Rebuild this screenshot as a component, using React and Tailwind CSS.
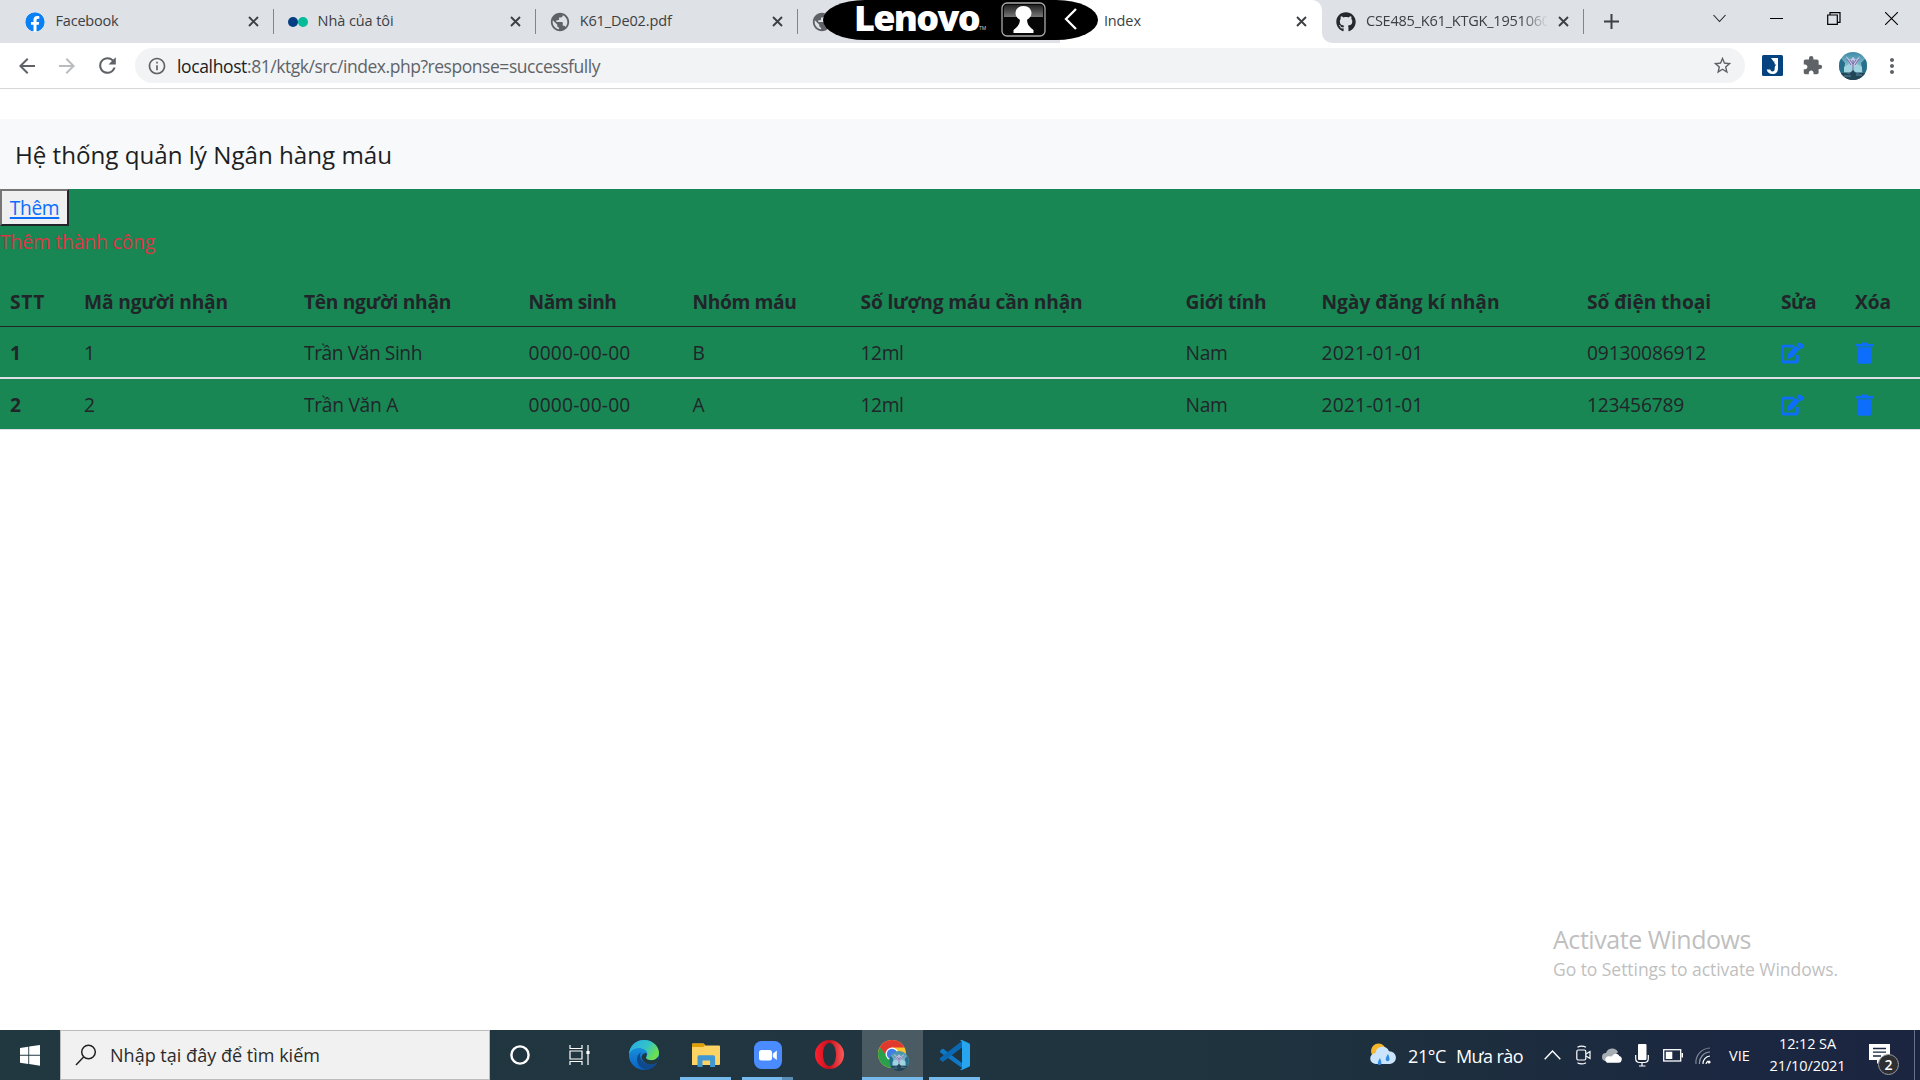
import React, { useLayoutEffect, useRef } from "react";
import { FaFacebook, FaGithub } from "react-icons/fa";
import { MdPublic, MdArrowBack, MdArrowForward, MdRefresh, MdInfoOutline, MdStarBorder, MdExtension, MdMoreVert } from "react-icons/md";

// Spaces the letters so that a label takes exactly w pixels.
function Fit({ w, className = "", children }) {
  const ref = useRef(null);
  useLayoutEffect(() => {
    const el = ref.current;
    el.style.letterSpacing = "0px";
    const natural = el.getBoundingClientRect().width;
    el.style.letterSpacing = (w - natural) / Math.max(1, el.textContent.length) + "px";
  }, [w, children]);
  return <span ref={ref} className={"inline-block whitespace-pre " + className}>{children}</span>;
}

const Close = () => (
  <svg className="h-[11px] w-[11px]" viewBox="0 0 11 11" stroke="#3c4043" strokeWidth="1.9">
    <path d="M1 1l9 9M10 1l-9 9" />
  </svg>
);

function Tab({ icon, title, w, active, close = true, sep = true, fade }) {
  return (
    <div className={"flex h-[43px] w-[262.1px] shrink-0 items-center " + (active ? "rounded-t-[10px] bg-white" : "")}>
      <div className="ml-[13px] flex w-[21px] shrink-0 justify-center">{icon}</div>
      <div className={"-mt-[2px] ml-[10px] w-[182px] shrink-0 overflow-hidden text-[14.500px] leading-5 text-[#3c4043] " + (fade ? "[mask-image:linear-gradient(to_right,black_155px,transparent_182px)]" : "")}>
        {title && <Fit w={w}>{title}</Fit>}
      </div>
      <div className="ml-[10.500px] w-[11px] shrink-0">{close && <Close />}</div>
      {sep && <div className="ml-auto h-[25px] w-px bg-[#80868b]" />}
    </div>
  );
}

function Avatar({ size }) {
  return (
    <svg className={size} viewBox="0 0 28 28">
      <defs>
        <clipPath id="avatar"><circle cx="14" cy="14" r="14" /></clipPath>
        <linearGradient id="sky" x2="0" y2="1"><stop stopColor="#3d8aa5" /><stop offset=".55" stopColor="#8cc4d4" /><stop offset="1" stopColor="#16364c" /></linearGradient>
      </defs>
      <g clipPath="url(#avatar)">
        <rect width="28" height="28" fill="url(#sky)" />
        <path d="M0 4l6 7-1 12H0zM28 5l-6 6 2 12h4z" fill="#286f8c" />
        <path d="M5 15l5-3h8l5 3v5H5z" fill="#9fd3df" />
        <path d="M7 4l3 8 4 4 4-4 3-8-4 4-3-3-3 3z" fill="#c4c6e4" />
        <path d="M8 7l4 6M20 7l-4 6M14 8v11M11 8l3 4 3-4" fill="none" stroke="#6f6da5" strokeWidth="1" />
        <path d="M2 21l5 0 3 1 4-4 4 4 3-1h5v7H2z" fill="#234558" />
        <path d="M5 24h7M17 23h6" stroke="#5b8ca0" strokeWidth="1" />
      </g>
    </svg>
  );
}

function LenovoPill() {
  return (
    <div className="absolute left-[823px] top-0 flex h-10 w-[275px] items-center rounded-[42px/20px] bg-black">
      <div className="ml-[31px] mt-[-5px] w-[125px] shrink-0"><Fit w={125} className="text-[36px] font-extrabold leading-[50px] text-white">Lenovo</Fit></div>
      <span className="mt-[18px] w-[8px] text-[5px] text-gray-300">TM</span>
      <svg className="ml-[14px] mt-[-2px] h-[35px] w-[45px] shrink-0" viewBox="0 0 45 35">
        <defs><linearGradient id="gloss" x2="0" y2="1"><stop stopColor="#222" /><stop offset="1" stopColor="#777" /></linearGradient></defs>
        <rect x="1" y="1" width="43" height="33" rx="5" fill="#050505" stroke="#aaa" strokeWidth="1.3" />
        <path d="M3 15V6q0-3 3-3h33q3 0 3 3v9z" fill="url(#gloss)" />
        <path d="M22.500 4c5 0 8 3.200 8 7.300 0 3-2 4.700-4.400 6.500 0 4 1.800 7 6.400 10.200v3H12.500v-3c4.600-3.200 6.400-6.200 6.400-10.200-2.400-1.800-4.400-3.500-4.400-6.500C14.500 7.200 17.500 4 22.500 4z" fill="#fff" />
      </svg>
      <svg className="ml-[18px] mt-[-2px] h-[22px] w-[13px] shrink-0" viewBox="0 0 13 22" fill="none" stroke="#fff" strokeWidth="2.300"><path d="M12 1L2 11l10 10" /></svg>
    </div>
  );
}

function Chrome() {
  return (
    <div className="relative h-[93px] bg-white">
    <div className="flex h-[89px] flex-col border-b border-[#d6d8da]">
      <div className="flex h-[43px] shrink-0 bg-[#dee1e6] pl-[11.5px]">
        <Tab icon={<FaFacebook className="h-5 w-5 rounded-full bg-white text-[#0a80f5]" />} title="Facebook" w={63} />
        <Tab icon={<svg className="ml-[2px] h-5 w-5 shrink-0" viewBox="0 0 20 20"><circle cx="5" cy="10" r="5" fill="#063e84" /><circle cx="15" cy="10" r="5" fill="#05bb99" /></svg>} title="Nhà của tôi" w={76} />
        <Tab icon={<MdPublic className="ml-[2px] h-[22px] w-[22px] shrink-0 text-[#5f6368]" />} title="K61_De02.pdf" w={92} />
        <Tab icon={<MdPublic className="ml-[2px] h-[22px] w-[22px] shrink-0 text-[#5f6368]" />} close={false} sep={false} />
        <Tab title="Index" w={37} active sep={false} />
        <div className="flex flex-1 bg-white">
          <div className="flex flex-1 rounded-bl-[10px] bg-[#dee1e6]">
            <Tab icon={<FaGithub className="ml-[2px] h-5 w-5 shrink-0 text-[#24292f]" />} title="CSE485_K61_KTGK_19510606" w={192} fade />
            <svg className="ml-[20px] mt-[14px] h-[15px] w-[15px]" viewBox="0 0 15 15" stroke="#3c4043" strokeWidth="2"><path d="M7.500 0v15M0 7.500h15" /></svg>
            <svg className="ml-[94px] mt-[14px] h-[9px] w-[13px]" viewBox="0 0 13 9" fill="none" stroke="#222" strokeWidth="1.100"><path d="M.5 1l6 6.500 6-6.500" /></svg>
            <div className="ml-[44px] mt-[18px] h-px w-[13px] bg-black" />
            <svg className="ml-[44px] mt-[12px] h-[13px] w-[14px]" viewBox="0 0 14 13" fill="none" stroke="#000" strokeWidth="1.200"><path d="M.7 3h9.600v9.400H.700zM3 3V.700h10v9.600h-2.700" /></svg>
            <svg className="ml-[44px] mt-[12px] h-[13px] w-[13px]" viewBox="0 0 13 13" stroke="#000" strokeWidth="1.100"><path d="M0 0l13 13M13 0L0 13" /></svg>
          </div>
        </div>
      </div>
      <div className="flex flex-1 items-center text-[#5f6368]">
        <MdArrowBack className="ml-[15px] h-[24px] w-[24px]" />
        <MdArrowForward className="ml-[16px] h-[24px] w-[24px] text-[#babcbe]" />
        <MdRefresh className="ml-[16px] h-[25px] w-[25px]" />
        <div className="ml-[15px] flex h-[35px] w-[1610px] items-center rounded-full bg-[#f1f3f4]">
          <MdInfoOutline className="ml-[12px] h-[20px] w-[20px]" />
          <div className="ml-[10px] flex text-[17.500px] leading-6">
            <Fit w={70} className="text-[#202124]">localhost</Fit>
            <Fit w={353}>:81/ktgk/src/index.php?response=successfully</Fit>
          </div>
          <MdStarBorder className="ml-auto mr-[12px] h-[21px] w-[21px]" />
        </div>
        <svg className="ml-[17px] h-[21px] w-[21px]" viewBox="0 0 21 21"><rect width="21" height="21" rx="1.500" fill="#04437f" /><path d="M9 3h7v10c0 4-2 6-5.500 6-3.200 0-5.300-1.700-5.700-4.500h3.500c.2 1.300 1 1.900 2.200 1.900 1.500 0 2.200-1 2.200-3V8z" fill="#fff" /><path d="M12.500 6l-4 5h3l-1.200 4 4-5.500h-2.800z" fill="#04437f" /></svg>
        <MdExtension className="ml-[19px] h-[21px] w-[21px]" />
        <Avatar size="ml-[16px] h-7 w-7" />
        <MdMoreVert className="ml-[13px] h-[24px] w-[24px]" />
      </div>
    </div>
    <LenovoPill />
    </div>
  );
}

const COLS = "grid grid-cols-[74px_220px_224.500px_164px_168px_325px_136px_265.500px_194px_74px_75px] items-center [&>*]:pl-[10px] [&>*]:pt-[2px]";

const HEAD = [["STT", 35], ["Mã người nhận", 144], ["Tên người nhận", 147], ["Năm sinh", 88], ["Nhóm máu", 104], ["Số lượng máu cần nhận", 222], ["Giới tính", 81], ["Ngày đăng kí nhận", 178], ["Số điện thoại", 124], ["Sửa", 35], ["Xóa", 36]];
const ROWS = [
  [["1", 11], ["1", 11], ["Trần Văn Sinh", 118], ["0000-00-00", 102], ["B", 12], ["12ml", 43], ["Nam", 42], ["2021-01-01", 102], ["09130086912", 119]],
  [["2", 11], ["2", 11], ["Trần Văn A", 94], ["0000-00-00", 102], ["A", 13], ["12ml", 43], ["Nam", 42], ["2021-01-01", 102], ["123456789", 97]],
];

const Edit = () => (
  <svg className="h-[22px] w-[23px]" viewBox="0 0 23 22">
    <path d="M13 4.200H2.700Q1.500 4.200 1.500 5.400V18.800Q1.500 20 2.700 20H15Q16.300 20 16.300 18.800V13" fill="none" stroke="#0d6efd" strokeWidth="2.800" />
    <path d="M6 17.500l1.200-5.800L14.300 3.500l4.500 3.600L11.500 15zM15.600 2.600L18 .2l4.700 2.600-.2 2.600-2.300 2z" fill="#0d6efd" />
  </svg>
);
const Trash = () => (
  <svg className="h-[22px] w-[19px]" viewBox="0 0 19 22" fill="#0d6efd">
    <path d="M0 3Q0 2 1 2h5l1-1.500h5L13 2h5q1 0 1 1v1.400H0zM2 5.200h15l-.6 14.800q-.1 1.700-1.700 1.700H4.300Q2.700 21.700 2.600 20z" />
  </svg>
);

function Page() {
  return (
    <div className="flex-1 pt-[26px] text-[19.200px] leading-[30px] text-[#212529]">
      <div className="flex h-[70px] items-center bg-[#f8f9fa] pl-[15px] pt-[2px] text-[24.200px] text-[#1c1f22]"><Fit w={377}>Hệ thống quản lý Ngân hàng máu</Fit></div>
      <div className="h-[241px] border-b border-[#dee2e6] bg-[#198754]">
        <button className="flex h-[37px] w-[69px] items-center justify-center border-2 border-b-[#212529] border-l-[#767676] border-r-[#212529] border-t-[#767676] bg-[#efefef] text-[#0d6efd]">
          <Fit w={49.5} className="underline decoration-2 underline-offset-2">Thêm</Fit>
        </button>
        <div className="h-[50px] pt-[1px] text-[#dc3545]"><Fit w={155}>Thêm thành công</Fit></div>
        <div className={"h-[51px] border-b border-[#212529] font-bold " + COLS}>
          {HEAD.map(([t, w]) => <div key={t}><Fit w={w}>{t}</Fit></div>)}
        </div>
        {ROWS.map((r, i) => (
          <div key={i} className={COLS + (i === 0 ? " h-[52px] border-b-2 border-[#dee2e6]" : " h-[50px]")}>
            {r.map(([t, w], j) => <div key={j} className={j === 0 ? "font-bold" : ""}><Fit w={w}>{t}</Fit></div>)}
            <div className="flex"><Edit /></div>
            <div className="flex"><Trash /></div>
          </div>
        ))}
      </div>
      <div className="ml-[1553px] mt-[492px] flex flex-col text-[#bfbfbf]">
        <Fit w={198} className="w-max text-[25px] leading-[34px]">Activate Windows</Fit>
        <Fit w={285} className="w-max text-[17.500px] leading-[26px]">Go to Settings to activate Windows.</Fit>
      </div>
    </div>
  );
}

function TaskButton({ children, bar, className = "" }) {
  return (
    <div className={"flex h-[50px] shrink-0 flex-col items-center " + className}>
      <div className="flex flex-1 items-center pt-[2px]">{children}</div>
      <div className={"h-[3px] w-full " + (bar || "")} />
    </div>
  );
}

const EdgeIcon = () => (
  <svg className="h-[30px] w-[30px]" viewBox="0 0 30 30">
    <defs>
      <linearGradient id="e1" y2=".5"><stop stopColor="#2aa9e8" /><stop offset=".6" stopColor="#32c3c8" /><stop offset="1" stopColor="#6ee04e" /></linearGradient>
      <linearGradient id="e2" x2="0" y2="1"><stop stopColor="#1b9de2" /><stop offset="1" stopColor="#0b63c4" /></linearGradient>
    </defs>
    <circle cx="15" cy="15" r="15" fill="url(#e2)" />
    <path d="M0 14C.8 5.500 7 0 15 0c9 0 15 6.500 15 13 0 4.500-3.500 7.300-7.500 7.300-3.500 0-5.500-1.300-5.500-2.600 0-.8 1.300-1.400 1.300-3.700C18.300 10.500 14 8 9.500 8 5.500 8 2 10 0 14z" fill="url(#e1)" />
    <path d="M12.500 12c-3 1.500-4.800 4.500-4.500 8 .4 5 4 9.200 9.500 10 4.500-.5 8.500-3.200 10.600-7.200-2 1.100-4 1.700-6.100 1.700-6 0-11-4-11-9 0-1.300.5-2.500 1.500-3.500z" fill="#104a8e" />
    <path d="M17 17.700c0 1.300 2 2.600 5.500 2.600 3 0 5.800-1.500 7-4.300l-.2 4.500-1.200 2.300c-2 1.100-4 1.700-6.100 1.700-6 0-9-4-9.500-7.500.5-2.500 2.500-4 5-4 .8 2-.5 3.700-.5 4.700z" fill="#213840" />
  </svg>
);

function Taskbar() {
  return (
    <div className="flex h-[50px] shrink-0 items-center bg-[linear-gradient(to_right,#213840_0%,#20343f_60%,#1d2f3e_75%,#1b2740_90%,#1b2540_100%)] text-white">
      <svg className="ml-[20px] h-[21px] w-[20px]" viewBox="0 0 20 21" fill="#fff"><path d="M0 3l8.300-1.300v8.100H0zM9.200 1.500L20 0v9.800H9.200zM0 10.700h8.300v8.200L0 17.700zM9.200 10.700H20v10L9.200 19z" /></svg>
      <div className="ml-[20px] flex h-[50px] w-[430px] items-center border border-[#bcbcbc] bg-[#f1f1f1] text-[#2b2b2b]">
        <svg className="ml-[14px] h-[22px] w-[22px]" viewBox="0 0 22 22" fill="none" stroke="#222" strokeWidth="1.500"><circle cx="13.500" cy="8" r="6.800" /><path d="M8.600 13L1 21" /></svg>
        <Fit w={210} className="ml-[13px] text-[18px]">Nhập tại đây để tìm kiếm</Fit>
      </div>
      <svg className="ml-[20px] h-[20px] w-[20px]" viewBox="0 0 20 20"><circle cx="10" cy="10" r="8.600" fill="none" stroke="#fff" strokeWidth="2.400" /></svg>
      <svg className="ml-[39px] h-[20px] w-[22px]" viewBox="0 0 22 20" fill="none" stroke="#fff" strokeWidth="1.200"><path d="M1 0v3.500h12V0M1 6h12v8H1zM1 20v-3.500h12V20M19 0v20" /><rect x="17.400" y="6" width="3.200" height="3" fill="#fff" stroke="none" /></svg>
      <TaskButton className="ml-[27px] w-[51px]"><EdgeIcon /></TaskButton>
      <TaskButton className="ml-[11px] w-[51px]" bar="bg-[#76b9ed]">
        <svg className="h-[24px] w-[28px]" viewBox="0 0 28 24"><path d="M0 1.500Q0 .5 1 .5h10.500l2 2H27q1 0 1 1V21q0 1-1 1H0z" fill="#fdd363" /><path d="M0 1.500Q0 .5 1 .5h10.500l1.500 1.500-1.500 2H0z" fill="#dfa006" /><path d="M5.500 24V14q0-1.700 1.700-1.700h14.200q1.700 0 1.700 1.700v10h-5v-6.500h-7.600V24z" fill="#3f97d4" /></svg>
      </TaskButton>
      <TaskButton className="ml-[11px] w-[51px]" bar="bg-[linear-gradient(to_right,#76b9ed_40px,#5a8db5_40px)]">
        <svg className="h-[28px] w-[28px]" viewBox="0 0 28 28"><rect width="28" height="28" rx="7.500" fill="#4a8cff" /><rect x="5" y="9" width="13" height="10.500" rx="2.500" fill="#fff" /><path d="M18.800 12.700L22.800 9.500v9.500l-4-3z" fill="#fff" /></svg>
      </TaskButton>
      <TaskButton className="ml-[11px] w-[51px]">
        <svg className="h-[29px] w-[29px]" viewBox="0 0 29 29"><defs><linearGradient id="op"><stop stopColor="#ff2030" /><stop offset=".5" stopColor="#c5101d" /><stop offset="1" stopColor="#ff5a5a" /></linearGradient></defs><path fillRule="evenodd" d="M14.500 0a14.500 14.500 0 1 0 0 29 14.500 14.500 0 0 0 0-29zM14.500 3c4 0 6.500 5 6.500 11.500S18.500 26 14.500 26 8 21 8 14.500 10.500 3 14.500 3z" fill="url(#op)" /></svg>
      </TaskButton>
      <TaskButton className="ml-[7px] w-[61px] bg-[#4b5b64]" bar="bg-[#76b9ed]">
        <div className="relative h-[30px] w-[30px]">
          <svg className="h-[28px] w-[28px]" viewBox="0 0 28 28"><circle cx="14" cy="14" r="14" fill="#fbc52d" /><path d="M14 14l0 14A14 14 0 0 1 1.900 7L8 14z" fill="#29a04b" /><path d="M14 7.500h12.400A14 14 0 0 0 1.900 7l6 8z" fill="#e2392f" /><circle cx="14" cy="14" r="6.500" fill="#fff" /><circle cx="14" cy="14" r="5.200" fill="#3f7de8" /></svg>
          <div className="absolute left-[11px] top-[11px]"><Avatar size="h-[20px] w-[20px]" /></div>
        </div>
      </TaskButton>
      <TaskButton className="ml-[6px] w-[51px]" bar="bg-[#76b9ed]">
        <svg className="h-[30px] w-[30px]" viewBox="0 0 30 30"><path d="M0 11l2-2q.8-.6 1.600 0L22 23v5L0 12.300z" fill="#1078c4" /><path d="M0 19.500l2 2q.8.500 1.600 0L22 7.500V1L0 18z" fill="#0b69b4" /><path d="M22 0l7 3.200q1 .5 1 1.600v20.400q0 1.100-1 1.600L22 30q-1.200.2-2-.8 2 .4 2-1.500V2.300Q22 .5 20 .8 21-.2 22 0z" fill="#27a5ee" /></svg>
      </TaskButton>
      <svg className="ml-[390px] h-[24px] w-[26px]" viewBox="0 0 26 24"><circle cx="8.500" cy="8" r="7.500" fill="#f8b62c" /><path d="M6 21a5.500 5.500 0 0 1-.5-11A7 7 0 0 1 19 8.200 6.300 6.300 0 0 1 20 21z" fill="#c9e4fb" /><path d="M10 15q-2.800 4-2 6.500 2 1.300 3.400-.5 .4-2.500-1.400-6zM18 11q-3 4-2 6.500 2 1.600 3.600-.4 .4-2.600-1.600-6.100z" fill="#2f8ce0" /></svg>
      <Fit w={38} className="ml-[12px] mt-[2px] text-[18px]">21°C</Fit>
      <Fit w={67} className="ml-[10px] mt-[2px] text-[18px]">Mưa rào</Fit>
      <svg className="ml-[21px] h-[10px] w-[17px]" viewBox="0 0 17 10" fill="none" stroke="#fff" strokeWidth="1.400"><path d="M.7 9.200L8.500 1l7.800 8.200" /></svg>
      <svg className="ml-[15px] h-[20px] w-[15px]" viewBox="0 0 15 20" fill="none" stroke="#fff" strokeWidth="1.200"><rect x=".8" y="5" width="9" height="10" rx="1.500" /><path d="M10 9l4-2.500v7L10 11M1.500 2.300q4-2.500 8.500 0M1.500 17.700q4 2.500 8.500 0" /></svg>
      <svg className="ml-[11px] h-[15px] w-[21px]" viewBox="0 0 21 15"><path d="M4 13a4 4 0 0 1 0-8 6.500 6.500 0 0 1 12-1l-6 6z" fill="#a8adb5" /><path d="M5 14.800a3.500 3.500 0 0 1 1-6.500c2-.5 3 .5 4 0 1.500-3.300 6-3.600 7.300-.3a3.500 3.500 0 0 1-.3 6.800z" fill="#fff" /></svg>
      <svg className="ml-[12px] h-[23px] w-[14px]" viewBox="0 0 14 23"><rect x="3" width="8.500" height="16" rx="1" fill="#fff" /><path d="M.7 11v3.500q0 4 4 4h4.600q4 0 4-4V11M7 18.500V22M4 22h6.500" fill="none" stroke="#fff" strokeWidth="1.200" /></svg>
      <svg className="ml-[14px] h-[13px] w-[20px]" viewBox="0 0 20 13"><rect x=".7" y=".7" width="17" height="11.300" fill="none" stroke="#fff" strokeWidth="1.300" /><path d="M18.500 4H20v4.500h-1.500zM2.800 2.800h6.500V10H2.800z" fill="#fff" /></svg>
      <svg className="ml-[12px] h-[17px] w-[16px]" viewBox="0 0 16 17" fill="none" strokeWidth="1.200"><path d="M1 17A14.500 14.500 0 0 1 15 1" stroke="#7c8594" /><path d="M4.500 17A11 11 0 0 1 15 5" stroke="#8f97a4" /><path d="M8 17a7.500 7.500 0 0 1 7-8" stroke="#fff" /><path d="M11 17a4.500 4.500 0 0 1 2-3" stroke="#fff" /><circle cx="14" cy="15" r="1.600" fill="#fff" /></svg>
      <Fit w={21} className="ml-[18px] mt-[1px] text-[14.500px]">VIE</Fit>
      <div className="ml-[19px] flex w-[77px] flex-col items-center text-[14.500px] leading-[22px]">
        <Fit w={57}>12:12 SA</Fit>
        <Fit w={76}>21/10/2021</Fit>
      </div>
      <div className="relative ml-[23px] h-[22px] w-[21px]">
        <svg className="h-[20px] w-[21px]" viewBox="0 0 21 20"><path d="M0 0h21v16h-9l-4 4v-4H0z" fill="#fff" /><path d="M4 4.500h13M4 8.200h13M4 12h8" stroke="#1b2640" strokeWidth="1.300" /></svg>
        <div className="absolute left-[9px] top-[10px] flex h-[21px] w-[21px] items-center justify-center rounded-full border border-[#9a9a9a] bg-[#2d2f33] text-[14px] font-semibold leading-none">2</div>
      </div>
      <div className="ml-auto mr-[5px] h-[50px] w-px bg-[#66708a]" />
    </div>
  );
}

export default function App() {
  return (
    <div className="flex h-[1080px] w-[1920px] flex-col overflow-hidden bg-white font-['Open_Sans','Noto_Sans',sans-serif]">
      <Chrome />
      <Page />
      <Taskbar />
    </div>
  );
}
